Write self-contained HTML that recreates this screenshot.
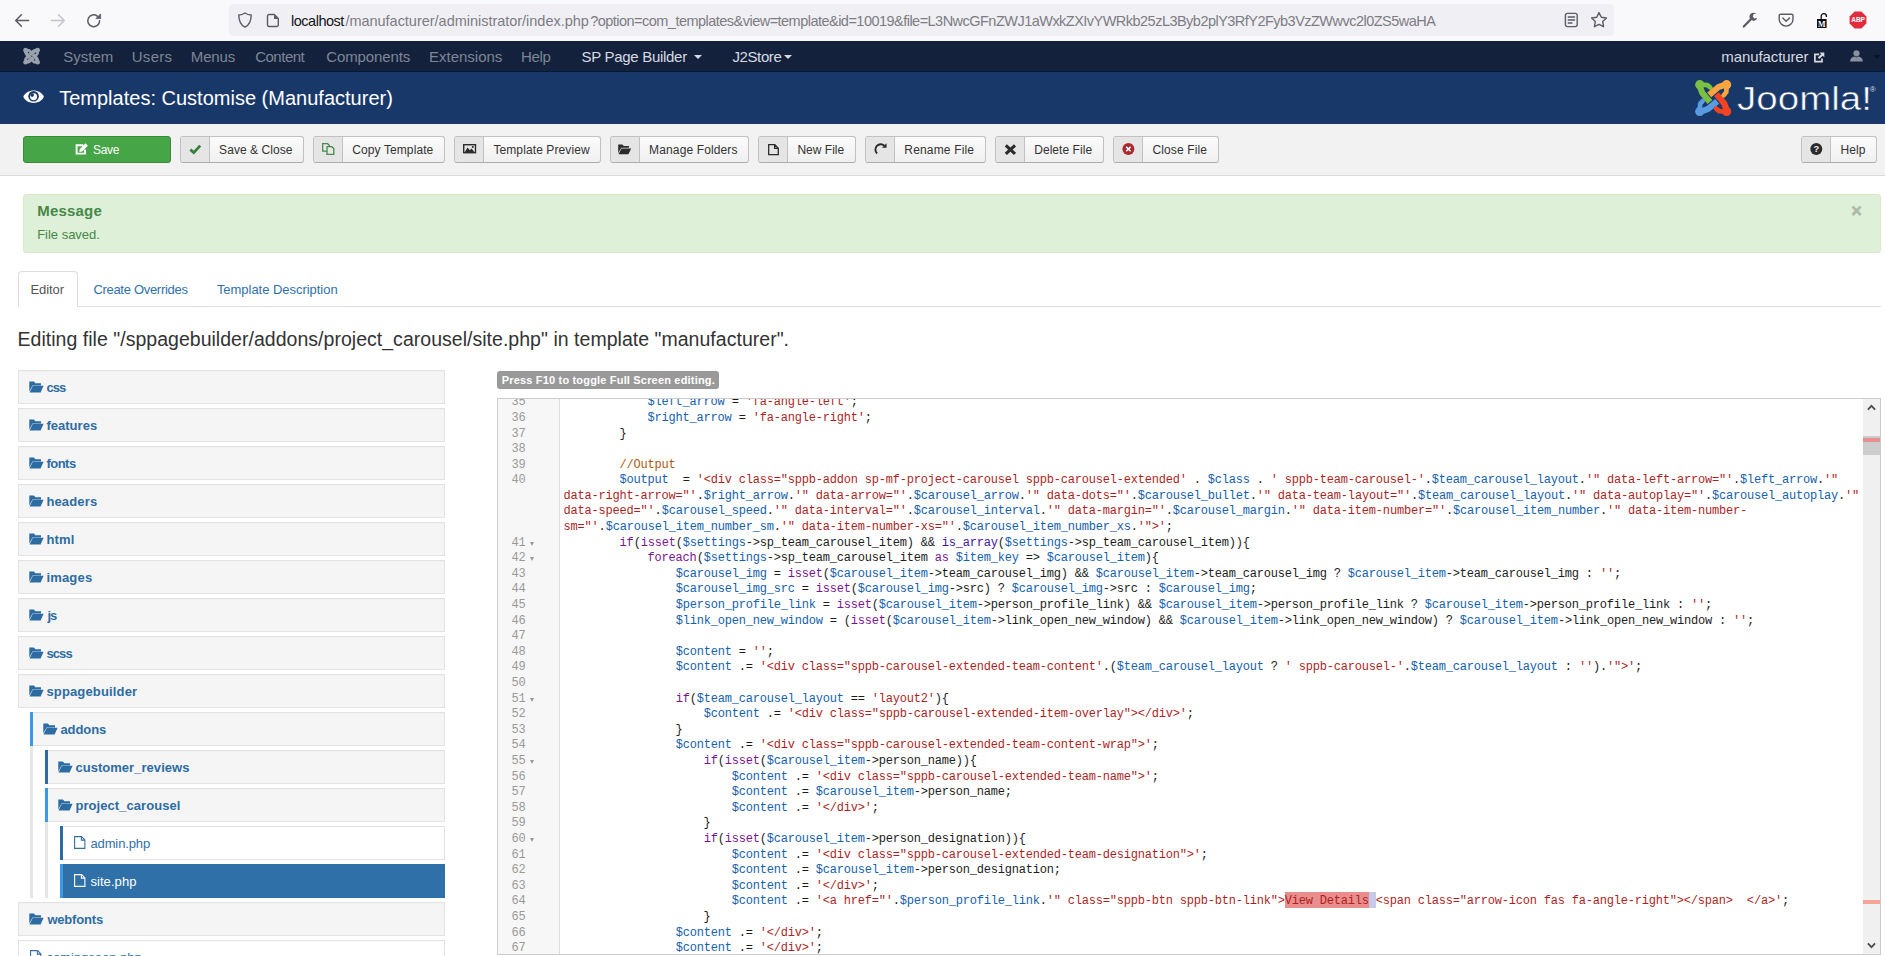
<!DOCTYPE html>
<html lang="en">
<head>
<meta charset="utf-8">
<title>Templates: Customise (Manufacturer)</title>
<style>
*{box-sizing:border-box;margin:0;padding:0}
html,body{width:1885px;height:956px;overflow:hidden;background:#fff}
body{font-family:"Liberation Sans",Arial,sans-serif;font-size:13px;color:#333;position:relative}
.a,.t{position:absolute}
.t{white-space:nowrap}
i{font-style:normal}
svg{display:block;position:absolute;overflow:visible}
/* browser chrome */
#chrome{left:0;top:0;width:1885px;height:41px;background:#f9f9fb}
#urlbar{left:229px;top:4px;width:1385px;height:32px;background:#f0f0f4;border-radius:4px}
#url{left:291.3px;top:11.5px;font-size:14px;line-height:18px;color:#6f6f78;white-space:nowrap}
#url b{font-weight:normal;color:#15141a}
/* navbar + header */
#nav{left:0;top:41px;width:1885px;height:31px;background:#14213c;border-bottom:1px solid #06183a}
#hdr{left:0;top:72px;width:1885px;height:52px;background:#19386a}
.caret{width:0;height:0;border-left:4px solid transparent;border-right:4px solid transparent;border-top:4px solid #d6dae1}
/* toolbar */
#tb{left:0;top:124px;width:1885px;height:52px;background:#f2f2f2;border-bottom:1px solid #dcdcdc}
.btn{top:136px;height:27px;border:1px solid #c1c1c1;border-bottom-color:#adadad;border-radius:3px;background:linear-gradient(#fbfbfb,#f0f0f0)}
.btn .ic{position:absolute;left:0;top:0;width:29px;height:25px;background:#e5e5e5;border-right:1px solid #c1c1c1;border-radius:2px 0 0 2px}
#save{left:23px;width:148px;background:#46a546;border-color:#3b8a3b}
/* alert */
#alert{left:23px;top:194px;width:1858px;height:59px;background:#dff0d8;border:1px solid #d6e9c6;border-radius:3px}
/* tabs */
#tabline{left:18px;top:306px;width:1863px;height:1px;background:#ddd}
#tab1{left:18px;top:271px;width:60px;height:36px;border:1px solid #ddd;border-bottom-color:#fff;border-radius:4px 4px 0 0;background:#fff}
/* tree */
.ti{position:absolute;height:34px;border:1px solid #e3e3e3;background:#f5f5f5;box-shadow:inset 0 1px 1px rgba(0,0,0,.02)}
.tl{position:absolute;white-space:nowrap;font-size:13px;line-height:18px;font-weight:bold;color:#2d6ca2}
.bar{position:absolute;width:3px}
/* editor */
#label{left:497px;top:371px;width:222px;height:18px;background:#999;border-radius:3px}
#ed{left:497px;top:398px;width:1384px;height:557px;border:1px solid #ccc;background:#fff;overflow:hidden}
#gut{position:absolute;left:0;top:0;width:62px;height:555px;background:#f7f7f7;border-right:1px solid #ddd}
#gl{position:absolute;left:0;top:-3.7px;width:61px}
.g{height:15.6px;font-family:"Liberation Mono",monospace;font-size:12px;line-height:15.6px;letter-spacing:-.2px;color:#999;text-align:right;padding-right:33.5px;position:relative;white-space:pre}
.g b{position:absolute;left:32px;top:6px;width:0;height:0;border-left:2.5px solid transparent;border-right:2.5px solid transparent;border-top:4px solid #999}
#code{position:absolute;left:65.6px;top:-3.7px;width:1300px}
.r{height:15.6px;font-family:"Liberation Mono",monospace;font-size:12px;line-height:15.6px;letter-spacing:-.2px;color:#1c1c1c;white-space:pre}
.s{color:#ad1f1f}.v{color:#1461ae}.k{color:#7a1490}.b{color:#3d14aa}.c{color:#aa5a10}
.m{background:#e98d8d;padding:2.4px 0 0}.n{background:#c9c9ea;padding:2.4px 0 0}
#sb{position:absolute;left:1365px;top:0;width:17px;height:555px;background:#f0f0f0}
#thumb{position:absolute;left:0;top:37px;width:17px;height:19px;background:#cdcdcd}
.mk{position:absolute;left:0;width:17px}

</style>
</head>
<body>
<div id="chrome" class="a"></div>
<div id="urlbar" class="a"></div>
<svg style="left:14px;top:13px" width="16" height="16" viewBox="0 0 16 16"><path d="M14.6 7.5 H1.9 M7.4 1.7 L1.7 7.5 L7.4 13.3" fill="none" stroke="#5b5b66" stroke-width="1.5" stroke-linecap="round" stroke-linejoin="round"/></svg>
<svg style="left:50px;top:13px" width="16" height="16" viewBox="0 0 16 16"><path d="M1.4 7.5 H14.1 M8.6 1.7 L14.3 7.5 L8.6 13.3" fill="none" stroke="#c4c4ca" stroke-width="1.5" stroke-linecap="round" stroke-linejoin="round"/></svg>
<svg style="left:86px;top:13px" width="16" height="16" viewBox="0 0 16 16"><path d="M13.6 7.8 A5.9 5.9 0 1 1 11.3 3.1" fill="none" stroke="#5b5b66" stroke-width="1.5" stroke-linecap="round"/><path d="M14.6 0.9 V5.6 H9.9 Z" fill="#5b5b66" stroke="#5b5b66" stroke-width="0.8" stroke-linejoin="round"/></svg>
<svg style="left:237px;top:12px" width="16" height="16" viewBox="0 0 16 16"><path d="M8 1 C10 2.4 12.4 3 14.2 3 C14.2 9 12.4 13 8 15.2 C3.6 13 1.8 9 1.8 3 C3.6 3 6 2.4 8 1 Z" fill="none" stroke="#5b5b66" stroke-width="1.4" stroke-linejoin="round"/></svg>
<svg style="left:266px;top:13px" width="14" height="15" viewBox="0 0 14 15"><path d="M3 1.5 H8.2 L12.3 5.6 V12 A1.5 1.5 0 0 1 10.8 13.5 H3 A1.5 1.5 0 0 1 1.5 12 V3 A1.5 1.5 0 0 1 3 1.5 Z" fill="none" stroke="#5b5b66" stroke-width="1.4" stroke-linejoin="round"/><path d="M8 1.6 V6 H12.2 Z" fill="#5b5b66"/></svg>
<svg style="left:1564px;top:12px" width="15" height="16" viewBox="0 0 15 16"><rect x="1.4" y="1.4" width="11.8" height="13.2" rx="2" fill="none" stroke="#5b5b66" stroke-width="1.4"/><path d="M4.2 5 H10.6 M4.2 8 H10.6 M4.2 11 H8" stroke="#5b5b66" stroke-width="1.3" stroke-linecap="round"/></svg>
<svg style="left:1590px;top:11px" width="18" height="17" viewBox="0 0 18 17"><path d="M9 1.6 L11.3 6.3 L16.4 7 L12.7 10.6 L13.6 15.7 L9 13.3 L4.4 15.7 L5.3 10.6 L1.6 7 L6.7 6.3 Z" fill="none" stroke="#5b5b66" stroke-width="1.4" stroke-linejoin="round"/></svg>
<svg style="left:1742px;top:12px" width="16" height="16" viewBox="0 0 16 16"><path d="M1.8 14.6 L8.6 7.4" stroke="#5b5b66" stroke-width="2.2" stroke-linecap="round"/><path d="M13.9 1.6 A4 4 0 1 0 15.3 5.3 L12.4 6.2 L10.6 4.3 L11.4 1.6 Z" fill="#5b5b66" transform="rotate(8 11 5)"/></svg>
<svg style="left:1778px;top:13px" width="16" height="14" viewBox="0 0 16 14"><path d="M2.6 1.2 H13.6 A1.4 1.4 0 0 1 15 2.6 V6.2 A6.9 6.9 0 0 1 1.2 6.2 V2.6 A1.4 1.4 0 0 1 2.6 1.2 Z" fill="none" stroke="#5b5b66" stroke-width="1.4"/><path d="M4.8 5 L8.1 8.2 L11.4 5" fill="none" stroke="#5b5b66" stroke-width="1.5" stroke-linecap="round" stroke-linejoin="round"/></svg>
<svg style="left:1816px;top:12px" width="13" height="17" viewBox="0 0 13 17"><path d="M5.2 7 V4.2 A2.6 2.6 0 0 1 10.4 4.2 V5" fill="none" stroke="#111" stroke-width="1.3"/><rect x="1" y="7" width="9.6" height="9" fill="#0c0c0d"/><text x="5.8" y="14.6" font-family="Liberation Serif,serif" font-weight="bold" font-size="8" fill="#fff" text-anchor="middle">M</text></svg>
<svg style="left:1849px;top:11px" width="18" height="18" viewBox="0 0 18 18"><path d="M5.6 0.6 H12.4 L17.4 5.6 V12.4 L12.4 17.4 H5.6 L0.6 12.4 V5.6 Z" fill="#e22b3c"/><text x="9" y="11.4" font-family="Liberation Sans,Arial,sans-serif" font-weight="bold" font-size="6.6" fill="#fff" text-anchor="middle" letter-spacing="-0.2">ABP</text></svg>
<div id="nav" class="a"></div>
<div id="hdr" class="a"></div>
<svg style="left:22.8px;top:48px" width="17.2" height="16.4" viewBox="0 0 100 100"><g transform="rotate(270 50 50)"><path d="M14 20 L20 36 L41 61" fill="none" stroke="#9aa2ae" stroke-width="23" stroke-linejoin="round"/><path d="M20 13 L34 14 L42 21" fill="none" stroke="#9aa2ae" stroke-width="17" stroke-linecap="round" stroke-linejoin="round"/><circle cx="13" cy="13" r="14" fill="#9aa2ae"/></g><g transform="rotate(180 50 50)"><path d="M14 20 L20 36 L41 61" fill="none" stroke="#9aa2ae" stroke-width="23" stroke-linejoin="round"/><path d="M20 13 L34 14 L42 21" fill="none" stroke="#9aa2ae" stroke-width="17" stroke-linecap="round" stroke-linejoin="round"/><circle cx="13" cy="13" r="14" fill="#9aa2ae"/></g><g transform="rotate(0 50 50)"><path d="M14 20 L20 36 L41 61" fill="none" stroke="#9aa2ae" stroke-width="23" stroke-linejoin="round"/><path d="M20 13 L34 14 L42 21" fill="none" stroke="#9aa2ae" stroke-width="17" stroke-linecap="round" stroke-linejoin="round"/><circle cx="13" cy="13" r="14" fill="#9aa2ae"/></g><g transform="rotate(90 50 50)"><path d="M14 20 L20 36 L41 61" fill="none" stroke="#9aa2ae" stroke-width="23" stroke-linejoin="round"/><path d="M20 13 L34 14 L42 21" fill="none" stroke="#9aa2ae" stroke-width="17" stroke-linecap="round" stroke-linejoin="round"/><circle cx="13" cy="13" r="14" fill="#9aa2ae"/></g></svg>
<svg style="left:1813px;top:51.6px" width="12" height="11" viewBox="0 0 12 11"><path d="M6.2 2.4 H1.9 V9.6 H9 V6.4" fill="none" stroke="#d6dae1" stroke-width="1.7"/><path d="M6.6 0.6 H11.3 V5.3 L9.7 3.7 L6.3 7.1 L4.8 5.6 L8.2 2.2 Z" fill="#d6dae1"/></svg>
<svg style="left:1850px;top:49.6px" width="13" height="11.4" viewBox="0 0 13 11.4"><circle cx="6.5" cy="3.3" r="3.1" fill="#8791a0"/><path d="M0.2 11.4 C0.2 8.2 2.6 7 4.6 6.6 L6.5 7.6 L8.4 6.6 C10.4 7 12.8 8.2 12.8 11.4 Z" fill="#8791a0"/></svg>
<svg style="left:22.8px;top:89.6px" width="21.2" height="13.4" viewBox="0 0 21.2 13.4"><path d="M0.3 6.7 C4 -1.6 17.2 -1.6 20.9 6.7 C17.2 15 4 15 0.3 6.7 Z" fill="#fff"/><circle cx="10.6" cy="6.3" r="5.3" fill="#19386a"/><circle cx="10.6" cy="6.8" r="3.5" fill="#fff"/><circle cx="9.2" cy="5.1" r="1.8" fill="#19386a"/></svg>
<div class="a caret" style="left:694px;top:55px"></div>
<div class="a caret" style="left:784px;top:55px"></div>
<div class="a caret" style="left:1873px;top:55px;border-top-color:#0a1428"></div>
<svg style="left:1695.0px;top:79.9px" width="36.4" height="36.2" viewBox="0 0 100 100"><g transform="rotate(270 50 50)"><path d="M14 20 L20 36 L41 61" fill="none" stroke="#5a9ae0" stroke-width="17" stroke-linejoin="round"/><path d="M20 13 L34 14 L42 21" fill="none" stroke="#5a9ae0" stroke-width="13" stroke-linecap="round" stroke-linejoin="round"/><circle cx="13" cy="13" r="12.8" fill="#5a9ae0"/></g><g transform="rotate(180 50 50)"><path d="M14 20 L20 36 L41 61" fill="none" stroke="#f44321" stroke-width="17" stroke-linejoin="round"/><path d="M20 13 L34 14 L42 21" fill="none" stroke="#f44321" stroke-width="13" stroke-linecap="round" stroke-linejoin="round"/><circle cx="13" cy="13" r="12.8" fill="#f44321"/></g><g transform="rotate(0 50 50)"><path d="M14 20 L20 36 L41 61" fill="none" stroke="#7ac043" stroke-width="17" stroke-linejoin="round"/><path d="M20 13 L34 14 L42 21" fill="none" stroke="#7ac043" stroke-width="13" stroke-linecap="round" stroke-linejoin="round"/><circle cx="13" cy="13" r="12.8" fill="#7ac043"/></g><g transform="rotate(90 50 50)"><path d="M14 20 L20 36 L41 61" fill="none" stroke="#f9a541" stroke-width="17" stroke-linejoin="round"/><path d="M20 13 L34 14 L42 21" fill="none" stroke="#f9a541" stroke-width="13" stroke-linecap="round" stroke-linejoin="round"/><circle cx="13" cy="13" r="12.8" fill="#f9a541"/></g></svg>
<div class="t" style="left:1737.4px;top:77.52px;font-size:34px;line-height:40px;color:#fff;-webkit-text-stroke:.55px #19386a;transform-origin:0 0;transform:scaleX(1.1334)">Joomla!</div>
<div class="t" style="left:1869.8px;top:84.5px;font-size:8px;line-height:10px;color:#d5dbe6">®</div>
<div id="tb" class="a"></div>
<div id="save" class="a btn"></div>
<div class="a btn" style="left:180px;width:124px"><div class="ic"></div></div>
<div class="a btn" style="left:313px;width:132px"><div class="ic"></div></div>
<div class="a btn" style="left:454px;width:147px"><div class="ic"></div></div>
<div class="a btn" style="left:610px;width:139px"><div class="ic"></div></div>
<div class="a btn" style="left:758px;width:98px"><div class="ic"></div></div>
<div class="a btn" style="left:865px;width:121px"><div class="ic"></div></div>
<div class="a btn" style="left:995px;width:109px"><div class="ic"></div></div>
<div class="a btn" style="left:1113px;width:106px"><div class="ic"></div></div>
<div class="a btn" style="left:1801px;width:76px"><div class="ic"></div></div>
<svg style="left:75.4px;top:143.2px" width="13.2" height="12.2" viewBox="0 0 13.2 12.2"><path d="M8.2 2.2 H1.6 V10.6 H10 V6.6" fill="none" stroke="#fff" stroke-width="1.9"/><path d="M10.4 0.3 L12.9 2.8 L7.2 8.5 L4.3 9 L4.8 6.1 Z" fill="#fff"/></svg>
<svg style="left:189px;top:143.8px" width="12.6" height="10.4" viewBox="0 0 12.6 10.4"><path d="M1.4 5.6 L4.8 8.6 L11.2 1.6" fill="none" stroke="#378039" stroke-width="2.8"/></svg>
<svg style="left:322.2px;top:143.3px" width="12.6" height="12" viewBox="0 0 12.6 12"><path d="M0.7 0.7 H5.6 L7.4 2.5 V8.2 H0.7 Z" fill="#e8e8e8" stroke="#478a49" stroke-width="1.3"/><path d="M5 3.7 H9.9 L11.8 5.6 V11.3 H5 Z" fill="#e8e8e8" stroke="#478a49" stroke-width="1.3"/></svg>
<svg style="left:462.8px;top:144.1px" width="13.2" height="9.4" viewBox="0 0 13.2 9.4"><rect x="0.7" y="0.7" width="11.8" height="8" fill="none" stroke="#2b2b2b" stroke-width="1.4"/><path d="M1.6 8.2 L4.6 3.4 L6.8 6.2 L8.6 4.6 L11.6 8.2 Z" fill="#2b2b2b"/><circle cx="9.8" cy="3" r="1" fill="#2b2b2b"/></svg>
<svg style="left:618.4px;top:144.1px" width="13.4" height="10.4" viewBox="0 0 13.4 10.4"><path d="M0.2 0.4 h4.2 l1.4 1.5 h5.2 v1.8 H3.2 L0.2 9.2 Z" fill="#2b2b2b"/><path d="M3.5 4.4 H13.2 L10.4 10.2 H0.5 Z" fill="#2b2b2b"/></svg>
<svg style="left:768px;top:143.6px" width="11.2" height="11.4" viewBox="0 0 11.2 11.4"><path d="M0.7 0.7 H6.8 L10.3 4.2 V10.7 H0.7 Z M6.6 0.9 V4.4 H10.1" fill="none" stroke="#2b2b2b" stroke-width="1.3"/></svg>
<svg style="left:874.2px;top:143.2px" width="12.8" height="11.4" viewBox="0 0 12.8 11.4"><path d="M3.1 10.5 A5 5 0 0 1 10.4 2.7" fill="none" stroke="#2b2b2b" stroke-width="1.9"/><path d="M12.6 0.2 V4.8 H7.9 Z" fill="#2b2b2b"/></svg>
<svg style="left:1004px;top:143.6px" width="12.8" height="11.4" viewBox="0 0 12.8 11.4"><path d="M1.8 1.4 L11 10 M11 1.4 L1.8 10" stroke="#2b2b2b" stroke-width="3.1"/></svg>
<svg style="left:1121.8px;top:143px" width="12.8" height="12.2" viewBox="0 0 12.8 12.2"><circle cx="6.4" cy="6.1" r="6" fill="#a82a2e"/><path d="M4.2 3.9 L8.6 8.3 M8.6 3.9 L4.2 8.3" stroke="#fff" stroke-width="1.5"/></svg>
<svg style="left:1810px;top:142.7px" width="12.6" height="12.2" viewBox="0 0 12.6 12.2"><circle cx="6.3" cy="6.1" r="6" fill="#2b2b2b"/><text x="6.3" y="9.4" font-family="Liberation Sans,Arial,sans-serif" font-weight="bold" font-size="9.4" fill="#f0f0f0" text-anchor="middle">?</text></svg>
<div id="alert" class="a"></div>
<div class="t" style="left:1851.2px;top:199.4px;font-size:18px;line-height:24px;font-weight:bold;color:#000;opacity:.22;-webkit-text-stroke:.7px #000">×</div>
<div id="tabline" class="a"></div>
<div id="tab1" class="a"></div>
<div class="a" style="left:30px;top:746px;width:3px;height:152px;background:#e6e6e6"></div>
<div class="a" style="left:45px;top:822px;width:3px;height:76px;background:#e6e6e6"></div>
<div class="ti" style="left:18px;top:370px;width:427px;background:#f5f5f5;border-color:#e3e3e3"></div>
<svg style="left:29px;top:381px" width="15" height="12" viewBox="0 0 15 12"><path d="M0.3 0.6 h4.6 l1.5 1.6 h5.6 v2.2 H3.5 L0.3 10.6 Z" fill="#2d6ca2"/><path d="M3.8 4.7 H14.6 L11.6 11.4 H0.5 Z" fill="#2d6ca2"/></svg>
<div class="tl" style="left:46.4px;top:379.2px;color:#2d6ca2;font-weight:bold;letter-spacing:-0.900px">css</div>
<div class="ti" style="left:18px;top:408px;width:427px;background:#f5f5f5;border-color:#e3e3e3"></div>
<svg style="left:29px;top:419px" width="15" height="12" viewBox="0 0 15 12"><path d="M0.3 0.6 h4.6 l1.5 1.6 h5.6 v2.2 H3.5 L0.3 10.6 Z" fill="#2d6ca2"/><path d="M3.8 4.7 H14.6 L11.6 11.4 H0.5 Z" fill="#2d6ca2"/></svg>
<div class="tl" style="left:46.4px;top:417.2px;color:#2d6ca2;font-weight:bold;letter-spacing:0.022px">features</div>
<div class="ti" style="left:18px;top:446px;width:427px;background:#f5f5f5;border-color:#e3e3e3"></div>
<svg style="left:29px;top:457px" width="15" height="12" viewBox="0 0 15 12"><path d="M0.3 0.6 h4.6 l1.5 1.6 h5.6 v2.2 H3.5 L0.3 10.6 Z" fill="#2d6ca2"/><path d="M3.8 4.7 H14.6 L11.6 11.4 H0.5 Z" fill="#2d6ca2"/></svg>
<div class="tl" style="left:46.4px;top:455.2px;color:#2d6ca2;font-weight:bold;letter-spacing:-0.510px">fonts</div>
<div class="ti" style="left:18px;top:484px;width:427px;background:#f5f5f5;border-color:#e3e3e3"></div>
<svg style="left:29px;top:495px" width="15" height="12" viewBox="0 0 15 12"><path d="M0.3 0.6 h4.6 l1.5 1.6 h5.6 v2.2 H3.5 L0.3 10.6 Z" fill="#2d6ca2"/><path d="M3.8 4.7 H14.6 L11.6 11.4 H0.5 Z" fill="#2d6ca2"/></svg>
<div class="tl" style="left:46.4px;top:493.2px;color:#2d6ca2;font-weight:bold;letter-spacing:0.145px">headers</div>
<div class="ti" style="left:18px;top:522px;width:427px;background:#f5f5f5;border-color:#e3e3e3"></div>
<svg style="left:29px;top:533px" width="15" height="12" viewBox="0 0 15 12"><path d="M0.3 0.6 h4.6 l1.5 1.6 h5.6 v2.2 H3.5 L0.3 10.6 Z" fill="#2d6ca2"/><path d="M3.8 4.7 H14.6 L11.6 11.4 H0.5 Z" fill="#2d6ca2"/></svg>
<div class="tl" style="left:46.4px;top:531.2px;color:#2d6ca2;font-weight:bold;letter-spacing:0.157px">html</div>
<div class="ti" style="left:18px;top:560px;width:427px;background:#f5f5f5;border-color:#e3e3e3"></div>
<svg style="left:29px;top:571px" width="15" height="12" viewBox="0 0 15 12"><path d="M0.3 0.6 h4.6 l1.5 1.6 h5.6 v2.2 H3.5 L0.3 10.6 Z" fill="#2d6ca2"/><path d="M3.8 4.7 H14.6 L11.6 11.4 H0.5 Z" fill="#2d6ca2"/></svg>
<div class="tl" style="left:46.4px;top:569.2px;color:#2d6ca2;font-weight:bold;letter-spacing:0.186px">images</div>
<div class="ti" style="left:18px;top:598px;width:427px;background:#f5f5f5;border-color:#e3e3e3"></div>
<svg style="left:29px;top:609px" width="15" height="12" viewBox="0 0 15 12"><path d="M0.3 0.6 h4.6 l1.5 1.6 h5.6 v2.2 H3.5 L0.3 10.6 Z" fill="#2d6ca2"/><path d="M3.8 4.7 H14.6 L11.6 11.4 H0.5 Z" fill="#2d6ca2"/></svg>
<div class="tl" style="left:47.4px;top:607.2px;color:#2d6ca2;font-weight:bold;letter-spacing:-0.900px">js</div>
<div class="ti" style="left:18px;top:636px;width:427px;background:#f5f5f5;border-color:#e3e3e3"></div>
<svg style="left:29px;top:647px" width="15" height="12" viewBox="0 0 15 12"><path d="M0.3 0.6 h4.6 l1.5 1.6 h5.6 v2.2 H3.5 L0.3 10.6 Z" fill="#2d6ca2"/><path d="M3.8 4.7 H14.6 L11.6 11.4 H0.5 Z" fill="#2d6ca2"/></svg>
<div class="tl" style="left:46.4px;top:645.2px;color:#2d6ca2;font-weight:bold;letter-spacing:-0.900px">scss</div>
<div class="ti" style="left:18px;top:674px;width:427px;background:#f5f5f5;border-color:#e3e3e3"></div>
<svg style="left:29px;top:685px" width="15" height="12" viewBox="0 0 15 12"><path d="M0.3 0.6 h4.6 l1.5 1.6 h5.6 v2.2 H3.5 L0.3 10.6 Z" fill="#2d6ca2"/><path d="M3.8 4.7 H14.6 L11.6 11.4 H0.5 Z" fill="#2d6ca2"/></svg>
<div class="tl" style="left:46.4px;top:683.2px;color:#2d6ca2;font-weight:bold;letter-spacing:0.159px">sppagebuilder</div>
<div class="ti" style="left:30px;top:712px;width:415px;background:#f5f5f5;border-color:#e3e3e3"></div>
<div class="bar" style="left:30px;top:712px;height:34px;background:#3a99e8"></div>
<svg style="left:43px;top:723px" width="15" height="12" viewBox="0 0 15 12"><path d="M0.3 0.6 h4.6 l1.5 1.6 h5.6 v2.2 H3.5 L0.3 10.6 Z" fill="#2d6ca2"/><path d="M3.8 4.7 H14.6 L11.6 11.4 H0.5 Z" fill="#2d6ca2"/></svg>
<div class="tl" style="left:60.4px;top:721.2px;color:#2d6ca2;font-weight:bold;letter-spacing:-0.079px">addons</div>
<div class="ti" style="left:45px;top:750px;width:400px;background:#f5f5f5;border-color:#e3e3e3"></div>
<div class="bar" style="left:45px;top:750px;height:34px;background:#2d6ca2"></div>
<svg style="left:58px;top:761px" width="15" height="12" viewBox="0 0 15 12"><path d="M0.3 0.6 h4.6 l1.5 1.6 h5.6 v2.2 H3.5 L0.3 10.6 Z" fill="#2d6ca2"/><path d="M3.8 4.7 H14.6 L11.6 11.4 H0.5 Z" fill="#2d6ca2"/></svg>
<div class="tl" style="left:75.4px;top:759.2px;color:#2d6ca2;font-weight:bold;letter-spacing:0.039px">customer_reviews</div>
<div class="ti" style="left:45px;top:788px;width:400px;background:#f5f5f5;border-color:#e3e3e3"></div>
<div class="bar" style="left:45px;top:788px;height:34px;background:#3a99e8"></div>
<svg style="left:58px;top:799px" width="15" height="12" viewBox="0 0 15 12"><path d="M0.3 0.6 h4.6 l1.5 1.6 h5.6 v2.2 H3.5 L0.3 10.6 Z" fill="#2d6ca2"/><path d="M3.8 4.7 H14.6 L11.6 11.4 H0.5 Z" fill="#2d6ca2"/></svg>
<div class="tl" style="left:75.4px;top:797.2px;color:#2d6ca2;font-weight:bold;letter-spacing:0.064px">project_carousel</div>
<div class="ti" style="left:60px;top:826px;width:385px;background:#fff;border-color:#e3e3e3"></div>
<div class="bar" style="left:60px;top:826px;height:34px;background:#2d6ca2"></div>
<svg style="left:74px;top:836px" width="12" height="13" viewBox="0 0 12 13"><path d="M0.6 0.6 H7.6 L10.9 3.9 V12.4 H0.6 Z M7.4 0.8 V4.1 H10.7" fill="none" stroke="#3a6e9e" stroke-width="1.1"/></svg>
<div class="tl" style="left:90.4px;top:835.2px;color:#3071a9;font-weight:normal;letter-spacing:-0.110px">admin.php</div>
<div class="ti" style="left:60px;top:864px;width:385px;background:#2f70a8;border-color:#2f70a8"></div>
<div class="bar" style="left:60px;top:864px;height:34px;background:#3a99e8"></div>
<svg style="left:74px;top:874px" width="12" height="13" viewBox="0 0 12 13"><path d="M0.6 0.6 H7.6 L10.9 3.9 V12.4 H0.6 Z M7.4 0.8 V4.1 H10.7" fill="none" stroke="#fff" stroke-width="1.1"/></svg>
<div class="tl" style="left:90.4px;top:873.2px;color:#fff;font-weight:normal;letter-spacing:0.071px">site.php</div>
<div class="ti" style="left:18px;top:902px;width:427px;background:#f5f5f5;border-color:#e3e3e3"></div>
<svg style="left:29px;top:913px" width="15" height="12" viewBox="0 0 15 12"><path d="M0.3 0.6 h4.6 l1.5 1.6 h5.6 v2.2 H3.5 L0.3 10.6 Z" fill="#2d6ca2"/><path d="M3.8 4.7 H14.6 L11.6 11.4 H0.5 Z" fill="#2d6ca2"/></svg>
<div class="tl" style="left:47.4px;top:911.2px;color:#2d6ca2;font-weight:bold;letter-spacing:-0.189px">webfonts</div>
<div class="ti" style="left:18px;top:940px;width:427px;background:#fff;border-color:#e3e3e3"></div>
<svg style="left:30px;top:950px" width="12" height="13" viewBox="0 0 12 13"><path d="M0.6 0.6 H7.6 L10.9 3.9 V12.4 H0.6 Z M7.4 0.8 V4.1 H10.7" fill="none" stroke="#3a6e9e" stroke-width="1.1"/></svg>
<div class="tl" style="left:46.4px;top:949.2px;color:#3071a9;font-weight:normal;letter-spacing:0.000px">comingsoon.php</div>
<div id="label" class="a"></div>
<div id="ed" class="a">
<div id="code">
<div class="r">            <i class="v">$left_arrow</i> = <i class="s">'fa-angle-left'</i>;</div>
<div class="r">            <i class="v">$right_arrow</i> = <i class="s">'fa-angle-right'</i>;</div>
<div class="r">        }</div>
<div class="r"> </div>
<div class="r">        <i class="c">//Output</i></div>
<div class="r">        <i class="v">$output</i>  = <i class="s">'&lt;div class="sppb-addon sp-mf-project-carousel sppb-carousel-extended'</i> . <i class="v">$class</i> . <i class="s">' sppb-team-carousel-'</i>.<i class="v">$team_carousel_layout</i>.<i class="s">'" data-left-arrow="'</i>.<i class="v">$left_arrow</i>.<i class="s">'" </i></div>
<div class="r"><i class="s">data-right-arrow="'</i>.<i class="v">$right_arrow</i>.<i class="s">'" data-arrow="'</i>.<i class="v">$carousel_arrow</i>.<i class="s">'" data-dots="'</i>.<i class="v">$carousel_bullet</i>.<i class="s">'" data-team-layout="'</i>.<i class="v">$team_carousel_layout</i>.<i class="s">'" data-autoplay="'</i>.<i class="v">$carousel_autoplay</i>.<i class="s">'" </i></div>
<div class="r"><i class="s">data-speed="'</i>.<i class="v">$carousel_speed</i>.<i class="s">'" data-interval="'</i>.<i class="v">$carousel_interval</i>.<i class="s">'" data-margin="'</i>.<i class="v">$carousel_margin</i>.<i class="s">'" data-item-number="'</i>.<i class="v">$carousel_item_number</i>.<i class="s">'" data-item-number-</i></div>
<div class="r"><i class="s">sm="'</i>.<i class="v">$carousel_item_number_sm</i>.<i class="s">'" data-item-number-xs="'</i>.<i class="v">$carousel_item_number_xs</i>.<i class="s">'"&gt;'</i>;</div>
<div class="r">        <i class="k">if</i>(<i class="k">isset</i>(<i class="v">$settings</i>-&gt;sp_team_carousel_item) &amp;&amp; <i class="b">is_array</i>(<i class="v">$settings</i>-&gt;sp_team_carousel_item)){</div>
<div class="r">            <i class="k">foreach</i>(<i class="v">$settings</i>-&gt;sp_team_carousel_item <i class="k">as</i> <i class="v">$item_key</i> =&gt; <i class="v">$carousel_item</i>){</div>
<div class="r">                <i class="v">$carousel_img</i> = <i class="k">isset</i>(<i class="v">$carousel_item</i>-&gt;team_carousel_img) &amp;&amp; <i class="v">$carousel_item</i>-&gt;team_carousel_img ? <i class="v">$carousel_item</i>-&gt;team_carousel_img : <i class="s">''</i>;</div>
<div class="r">                <i class="v">$carousel_img_src</i> = <i class="k">isset</i>(<i class="v">$carousel_img</i>-&gt;src) ? <i class="v">$carousel_img</i>-&gt;src : <i class="v">$carousel_img</i>;</div>
<div class="r">                <i class="v">$person_profile_link</i> = <i class="k">isset</i>(<i class="v">$carousel_item</i>-&gt;person_profile_link) &amp;&amp; <i class="v">$carousel_item</i>-&gt;person_profile_link ? <i class="v">$carousel_item</i>-&gt;person_profile_link : <i class="s">''</i>;</div>
<div class="r">                <i class="v">$link_open_new_window</i> = (<i class="k">isset</i>(<i class="v">$carousel_item</i>-&gt;link_open_new_window) &amp;&amp; <i class="v">$carousel_item</i>-&gt;link_open_new_window) ? <i class="v">$carousel_item</i>-&gt;link_open_new_window : <i class="s">''</i>;</div>
<div class="r"> </div>
<div class="r">                <i class="v">$content</i> = <i class="s">''</i>;</div>
<div class="r">                <i class="v">$content</i> .= <i class="s">'&lt;div class="sppb-carousel-extended-team-content'</i>.(<i class="v">$team_carousel_layout</i> ? <i class="s">' sppb-carousel-'</i>.<i class="v">$team_carousel_layout</i> : <i class="s">''</i>).<i class="s">'"&gt;'</i>;</div>
<div class="r"> </div>
<div class="r">                <i class="k">if</i>(<i class="v">$team_carousel_layout</i> == <i class="s">'layout2'</i>){</div>
<div class="r">                    <i class="v">$content</i> .= <i class="s">'&lt;div class="sppb-carousel-extended-item-overlay"&gt;&lt;/div&gt;'</i>;</div>
<div class="r">                }</div>
<div class="r">                <i class="v">$content</i> .= <i class="s">'&lt;div class="sppb-carousel-extended-team-content-wrap"&gt;'</i>;</div>
<div class="r">                    <i class="k">if</i>(<i class="k">isset</i>(<i class="v">$carousel_item</i>-&gt;person_name)){</div>
<div class="r">                        <i class="v">$content</i> .= <i class="s">'&lt;div class="sppb-carousel-extended-team-name"&gt;'</i>;</div>
<div class="r">                        <i class="v">$content</i> .= <i class="v">$carousel_item</i>-&gt;person_name;</div>
<div class="r">                        <i class="v">$content</i> .= <i class="s">'&lt;/div&gt;'</i>;</div>
<div class="r">                    }</div>
<div class="r">                    <i class="k">if</i>(<i class="k">isset</i>(<i class="v">$carousel_item</i>-&gt;person_designation)){</div>
<div class="r">                        <i class="v">$content</i> .= <i class="s">'&lt;div class="sppb-carousel-extended-team-designation"&gt;'</i>;</div>
<div class="r">                        <i class="v">$content</i> .= <i class="v">$carousel_item</i>-&gt;person_designation;</div>
<div class="r">                        <i class="v">$content</i> .= <i class="s">'&lt;/div&gt;'</i>;</div>
<div class="r">                        <i class="v">$content</i> .= <i class="s">'&lt;a href="'</i>.<i class="v">$person_profile_link</i>.<i class="s">'" class="sppb-btn sppb-btn-link"&gt;<i class="m">View Details</i><i class="n"> </i>&lt;span class="arrow-icon fas fa-angle-right"&gt;&lt;/span&gt;  &lt;/a&gt;'</i>;</div>
<div class="r">                    }</div>
<div class="r">                <i class="v">$content</i> .= <i class="s">'&lt;/div&gt;'</i>;</div>
<div class="r">                <i class="v">$content</i> .= <i class="s">'&lt;/div&gt;'</i>;</div>
</div>
<div id="gut"><div id="gl">
<div class="g">35</div>
<div class="g">36</div>
<div class="g">37</div>
<div class="g">38</div>
<div class="g">39</div>
<div class="g">40</div>
<div class="g"></div>
<div class="g"></div>
<div class="g"></div>
<div class="g">41<b></b></div>
<div class="g">42<b></b></div>
<div class="g">43</div>
<div class="g">44</div>
<div class="g">45</div>
<div class="g">46</div>
<div class="g">47</div>
<div class="g">48</div>
<div class="g">49</div>
<div class="g">50</div>
<div class="g">51<b></b></div>
<div class="g">52</div>
<div class="g">53</div>
<div class="g">54</div>
<div class="g">55<b></b></div>
<div class="g">56</div>
<div class="g">57</div>
<div class="g">58</div>
<div class="g">59</div>
<div class="g">60<b></b></div>
<div class="g">61</div>
<div class="g">62</div>
<div class="g">63</div>
<div class="g">64</div>
<div class="g">65</div>
<div class="g">66</div>
<div class="g">67</div>
</div></div>
<div id="sb">
<div id="thumb"></div>
<div class="mk" style="top:39.4px;height:3.6px;background:#e39090"></div>
<div class="mk" style="top:501.4px;height:3.2px;background:#f3a596"></div>
<svg style="left:4px;top:5px" width="9" height="7" viewBox="0 0 9 7"><path d="M0.9 5.6 L4.5 1.8 L8.1 5.6" fill="none" stroke="#4a4a4a" stroke-width="1.7"/></svg>
<svg style="left:4px;top:543px" width="9" height="7" viewBox="0 0 9 7"><path d="M0.9 1.4 L4.5 5.2 L8.1 1.4" fill="none" stroke="#4a4a4a" stroke-width="1.7"/></svg>
</div>
</div>
<div class="t" style="left:63.2px;top:45.60px;font-size:15px;line-height:21px;color:#7d8694;font-weight:normal;letter-spacing:0.017px;">System</div>
<div class="t" style="left:131.7px;top:45.60px;font-size:15px;line-height:21px;color:#7d8694;font-weight:normal;letter-spacing:0.308px;">Users</div>
<div class="t" style="left:190.8px;top:45.60px;font-size:15px;line-height:21px;color:#7d8694;font-weight:normal;letter-spacing:-0.130px;">Menus</div>
<div class="t" style="left:255.2px;top:45.60px;font-size:15px;line-height:21px;color:#7d8694;font-weight:normal;letter-spacing:-0.495px;">Content</div>
<div class="t" style="left:326.2px;top:45.60px;font-size:15px;line-height:21px;color:#7d8694;font-weight:normal;letter-spacing:-0.117px;">Components</div>
<div class="t" style="left:429.1px;top:45.60px;font-size:15px;line-height:21px;color:#7d8694;font-weight:normal;letter-spacing:-0.019px;">Extensions</div>
<div class="t" style="left:521.1px;top:45.60px;font-size:15px;line-height:21px;color:#7d8694;font-weight:normal;letter-spacing:-0.402px;">Help</div>
<div class="t" style="left:581.6px;top:45.60px;font-size:15px;line-height:21px;color:#d6dae1;font-weight:normal;letter-spacing:-0.305px;">SP Page Builder</div>
<div class="t" style="left:732.4px;top:45.60px;font-size:15px;line-height:21px;color:#d6dae1;font-weight:normal;letter-spacing:-0.375px;">J2Store</div>
<div class="t" style="left:1721.3px;top:45.60px;font-size:15px;line-height:21px;color:#d6dae1;font-weight:normal;letter-spacing:-0.098px;">manufacturer</div>
<div class="t" style="left:291.0px;top:10.78px;font-size:14.5px;line-height:20px;color:#15141a;font-weight:normal;letter-spacing:-0.487px;">localhost</div>
<div class="t" style="left:345.4px;top:10.78px;font-size:14.5px;line-height:20px;color:#7d7c84;font-weight:normal;letter-spacing:-0.021px;">/manufacturer/administrator/index.php</div>
<div class="t" style="left:590.2px;top:10.78px;font-size:14.5px;line-height:20px;color:#7d7c84;font-weight:normal;letter-spacing:-0.523px;">?option=com_templates&amp;view=template&amp;id=10019&amp;file=L3NwcGFnZWJ1aWxkZXIvYWRkb25zL3Byb2plY3RfY2Fyb3VzZWwvc2l0ZS5waHA</div>
<div class="t" style="left:59.2px;top:83.87px;font-size:20px;line-height:28px;color:#fff;font-weight:normal;letter-spacing:0.006px;">Templates: Customise (Manufacturer)</div>
<div class="t" style="left:93.1px;top:142.24px;font-size:12px;line-height:17px;color:#fff;font-weight:normal;letter-spacing:-0.359px;">Save</div>
<div class="t" style="left:219.1px;top:142.24px;font-size:12px;line-height:17px;color:#333;font-weight:normal;letter-spacing:0.052px;">Save &amp; Close</div>
<div class="t" style="left:352.3px;top:142.24px;font-size:12px;line-height:17px;color:#333;font-weight:normal;letter-spacing:0.095px;">Copy Template</div>
<div class="t" style="left:493.4px;top:142.24px;font-size:12px;line-height:17px;color:#333;font-weight:normal;letter-spacing:0.104px;">Template Preview</div>
<div class="t" style="left:649.1px;top:142.24px;font-size:12px;line-height:17px;color:#333;font-weight:normal;letter-spacing:0.130px;">Manage Folders</div>
<div class="t" style="left:797.4px;top:142.24px;font-size:12px;line-height:17px;color:#333;font-weight:normal;letter-spacing:0.014px;">New File</div>
<div class="t" style="left:904.3px;top:142.24px;font-size:12px;line-height:17px;color:#333;font-weight:normal;letter-spacing:0.165px;">Rename File</div>
<div class="t" style="left:1034.2px;top:142.24px;font-size:12px;line-height:17px;color:#333;font-weight:normal;letter-spacing:0.052px;">Delete File</div>
<div class="t" style="left:1152.5px;top:142.24px;font-size:12px;line-height:17px;color:#333;font-weight:normal;letter-spacing:0.114px;">Close File</div>
<div class="t" style="left:1840.5px;top:142.24px;font-size:12px;line-height:17px;color:#333;font-weight:normal;letter-spacing:0.098px;">Help</div>
<div class="t" style="left:37.2px;top:199.80px;font-size:15px;line-height:21px;color:#468847;font-weight:bold;letter-spacing:0.212px;">Message</div>
<div class="t" style="left:37.2px;top:226.10px;font-size:13px;line-height:18px;color:#468847;font-weight:normal;letter-spacing:-0.015px;">File saved.</div>
<div class="t" style="left:30.4px;top:280.70px;font-size:13px;line-height:18px;color:#555;font-weight:normal;letter-spacing:-0.066px;">Editor</div>
<div class="t" style="left:93.4px;top:280.70px;font-size:13px;line-height:18px;color:#3071a9;font-weight:normal;letter-spacing:-0.299px;">Create Overrides</div>
<div class="t" style="left:216.9px;top:280.70px;font-size:13px;line-height:18px;color:#3071a9;font-weight:normal;letter-spacing:-0.035px;">Template Description</div>
<div class="t" style="left:17.5px;top:325.74px;font-size:19.5px;line-height:27px;color:#333;font-weight:normal;letter-spacing:0.027px;">Editing file "/sppagebuilder/addons/project_carousel/site.php" in template "manufacturer".</div>
<div class="t" style="left:501.7px;top:372.79px;font-size:11px;line-height:15px;color:#fff;font-weight:bold;letter-spacing:0.181px;">Press F10 to toggle Full Screen editing.</div>

</body>
</html>
